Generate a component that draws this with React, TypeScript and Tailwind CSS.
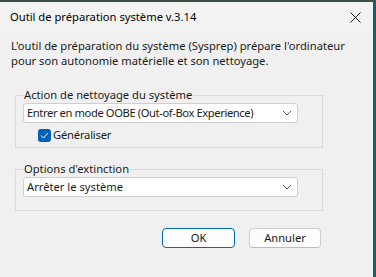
import React from "react";

const font = { fontFamily: '"Noto Sans", "Segoe UI", sans-serif' };

const Chevron = () => (
  <svg width="10" height="6" viewBox="0 0 10 6" className="mr-[5px] shrink-0">
    <path d="M1 1 L5 5 L9 1" fill="none" stroke="#5f5f5f" strokeWidth="1" />
  </svg>
);

const Dropdown = ({ value, tight }: { value: string; tight?: boolean }) => (
  <div className="h-[20px] w-[275px] bg-white border border-[#cfcfcf] rounded-[3px] flex items-center justify-between pl-[3px]">
    <span className={tight ? "text-[11.2px] leading-[14px] text-[#1a1a1a] whitespace-nowrap tracking-[-0.4px]" : "text-[11.2px] leading-[14px] text-[#1a1a1a] whitespace-nowrap"}>
      {value}
    </span>
    <Chevron />
  </div>
);

const App = () => {
  return (
    <div className="w-[376px] h-[277px] bg-[#1f5a60] flex flex-col overflow-hidden" style={font}>
      <div className="h-[2px] bg-[#3b4f45]" />
      <div className="flex flex-1">
        <div className="w-[373px] h-full bg-[#f0f0f0] flex flex-col">
          {/* title bar */}
          <div className="h-[31px] bg-[#f3f3f3] flex items-center justify-between pl-[10px] pr-[12px]">
            <span className="text-[11.2px] text-black whitespace-nowrap">Outil de préparation système v.3.14</span>
            <svg width="11" height="11" viewBox="0 0 11 11">
              <path d="M0.5 0.5 L10.5 10.5 M10.5 0.5 L0.5 10.5" stroke="#1a1a1a" strokeWidth="1" />
            </svg>
          </div>

          <div className="pl-[11px] mt-[5px] text-[11.2px] leading-[15px] text-[#1a1a1a] whitespace-nowrap">
            L'outil de préparation du système (Sysprep) prépare l'ordinateur
            <br />
            pour son autonomie matérielle et son nettoyage.
          </div>

          <fieldset className="ml-[15px] mt-[20px] w-[308px] h-[60px] border border-[#dadada] px-[7px]">
            <legend className="px-[1px] text-[11.2px] leading-[14px] text-[#1a1a1a] whitespace-nowrap">Action de nettoyage du système</legend>
            <div className="mt-[1px]">
              <Dropdown value="Entrer en mode OOBE (Out-of-Box Experience)" tight />
            </div>
            <div className="flex items-center mt-[5px] ml-[15px] gap-[2px]">
              <div className="w-[13px] h-[13px] rounded-[3px] bg-[#005fb8] flex items-center justify-center">
                <svg width="9" height="7" viewBox="0 0 9 7">
                  <path d="M1 3.5 L3.5 6 L8 1" fill="none" stroke="white" strokeWidth="1" />
                </svg>
              </div>
              <span className="text-[11.2px] leading-[14px] text-[#1a1a1a] tracking-[-0.2px]">Généraliser</span>
            </div>
          </fieldset>

          <fieldset className="ml-[15px] mt-[14px] w-[308px] h-[49px] border border-[#dadada] px-[7px]">
            <legend className="px-[1px] text-[11.2px] leading-[14px] text-[#1a1a1a] whitespace-nowrap">Options d'extinction</legend>
            <div className="mt-[1px]">
              <Dropdown value="Arrêter le système" />
            </div>
          </fieldset>

          <div className="flex ml-[162px] mt-[17px] gap-[14px]">
            <button className="w-[73px] h-[20px] bg-[#fdfdfd] border border-[#0067c0] rounded-[4px] text-[11.2px] leading-[14px] text-[#1a1a1a]">
              OK
            </button>
            <button className="w-[72px] h-[20px] bg-[#fdfdfd] border border-[#d0d0d0] border-b-[#bcbcbc] rounded-[4px] text-[11.2px] leading-[14px] text-[#1a1a1a]">
              Annuler
            </button>
          </div>
        </div>
        <div className="flex-1 bg-[#1d5c66]" />
      </div>
    </div>
  );
};

export default App;
